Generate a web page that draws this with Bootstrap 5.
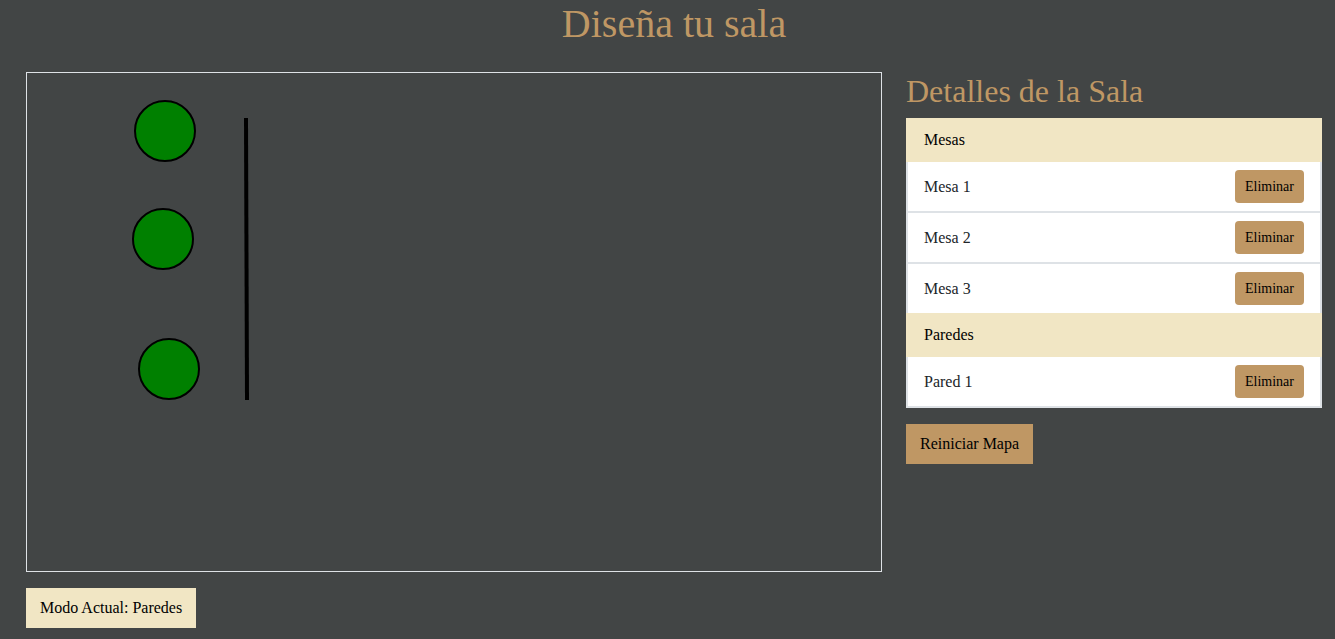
<!DOCTYPE html>
<html lang="es">
<head>
<meta charset="utf-8">
<meta name="viewport" content="width=device-width, initial-scale=1">
<title>Diseña tu sala</title>
<link href="https://cdn.jsdelivr.net/npm/bootstrap@5.3.0/dist/css/bootstrap.min.css" rel="stylesheet">
<style>
body{background:#424545;font-family:"Liberation Serif",serif;color:#000}
h1,h2{color:#bf9764;font-weight:400}
h1{font-size:40px}
h2{font-size:32px}
.page{padding-left:26px;padding-right:13px}
.room{height:500px;border:1px solid #dee2e6}
.btn{--bs-btn-color:#000;--bs-btn-hover-color:#000}
.btn-gold{--bs-btn-bg:#bf9764;--bs-btn-hover-bg:#ab8452}
.btn-cream{--bs-btn-bg:#f1e6c4;--bs-btn-hover-bg:#e5d6a9}
.btn-flat{--bs-btn-border-radius:0;padding:7px 13px}
.btn-sm{padding:5px 9px}
.items{--bs-list-group-border-width:2px;--bs-list-group-border-radius:0;--bs-list-group-color:#212529;--bs-list-group-border-color:#dee2e6;--bs-list-group-active-bg:#f1e6c4;--bs-list-group-active-border-color:#f1e6c4;--bs-list-group-active-color:#000}
</style>
</head>
<body>
<main class="container-fluid page">
<h1 class="text-center mb-4">Diseña tu sala</h1>
<div class="row">
<div class="col-md-8">
<svg class="room d-block w-100" role="img" aria-label="Mapa de la sala">
<line x1="219" y1="45" x2="220" y2="327" stroke="#000" stroke-width="4"/>
<g fill="green" stroke="#000" stroke-width="2"><circle cx="138" cy="58" r="30"/><circle cx="136" cy="166" r="30"/><circle cx="142" cy="296" r="30"/></g>
</svg>
<button type="button" class="btn btn-cream btn-flat mt-3">Modo Actual: Paredes</button>
</div>
<div class="col-md-4">
<h2>Detalles de la Sala</h2>
<ul class="list-group items">
<li class="list-group-item active">Mesas</li>
<li class="list-group-item d-flex justify-content-between align-items-center">Mesa 1<button type="button" class="btn btn-gold btn-sm">Eliminar</button></li>
<li class="list-group-item d-flex justify-content-between align-items-center">Mesa 2<button type="button" class="btn btn-gold btn-sm">Eliminar</button></li>
<li class="list-group-item d-flex justify-content-between align-items-center">Mesa 3<button type="button" class="btn btn-gold btn-sm">Eliminar</button></li>
<li class="list-group-item active">Paredes</li>
<li class="list-group-item d-flex justify-content-between align-items-center">Pared 1<button type="button" class="btn btn-gold btn-sm">Eliminar</button></li>
</ul>
<button type="button" class="btn btn-gold btn-flat mt-3">Reiniciar Mapa</button>
</div>
</div>
</main>
<script src="https://cdn.jsdelivr.net/npm/bootstrap@5.3.0/dist/js/bootstrap.bundle.min.js"></script>
</body>
</html>
